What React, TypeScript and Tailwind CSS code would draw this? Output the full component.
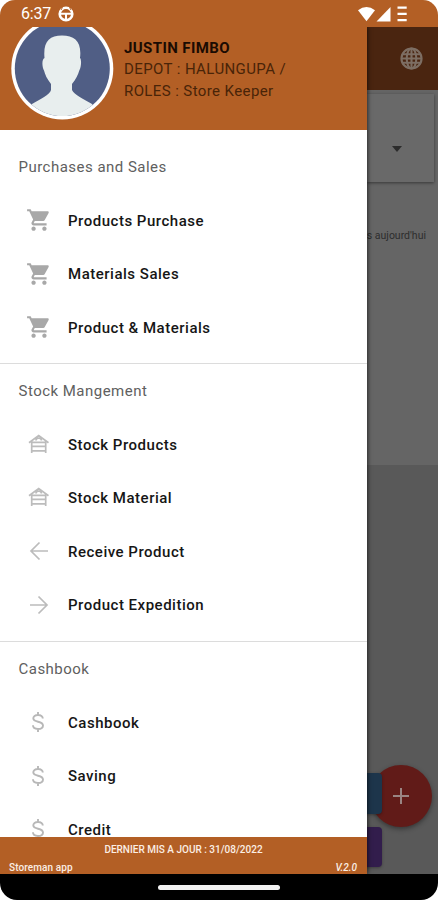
import type { ReactNode } from "react";

const CartIcon = () => (
  <svg viewBox="0 0 24 24" className="mb-[1px] ml-[25.5px] h-[26px] w-[26px] fill-[#a8a8a8]">
    <path d="M7 18c-1.1 0-1.990.9-1.990 2S5.900 22 7 22s2-.9 2-2-.9-2-2-2zM1 2v2h2l3.600 7.590-1.350 2.450c-.16.28-.25.61-.25.96 0 1.100.9 2 2 2h12v-2H7.420c-.14 0-.25-.11-.25-.25l.03-.12.9-1.630h7.450c.75 0 1.410-.41 1.750-1.030l3.580-6.490c.08-.14.12-.31.12-.48 0-.55-.45-1-1-1H5.210l-.94-2H1zm16 16c-1.100 0-1.990.9-1.990 2s.89 2 1.990 2 2-.9 2-2-.9-2-2-2z" />
  </svg>
);

const StoreIcon = () => (
  <svg viewBox="0 0 22 20" className="mb-[2px] ml-[28px] h-[20px] w-[22px] fill-none stroke-[#bcbcbc] stroke-[1.700]">
    <path d="M1 8.700 10.700 1.500 20.500 8.700M3.700 7v12M17.700 7v12M3.700 8.300h14M3.700 12.300h14M3.700 16.800h14M8 6.500a2.700 2.300 0 0 1 5.400 0" />
  </svg>
);

const LeftIcon = () => (
  <svg viewBox="0 0 20 20" className="mb-[1px] ml-[29px] h-5 w-5 fill-none stroke-[#bcbcbc] stroke-[1.700]">
    <path d="M19 10H2M10.500 1.500 2 10l8.500 8.500" />
  </svg>
);

const RightIcon = () => (
  <svg viewBox="0 0 20 20" className="mb-[1px] ml-[29px] h-5 w-5 fill-none stroke-[#bcbcbc] stroke-[1.700]">
    <path d="M1 10h17M9.500 1.500 18 10l-8.500 8.500" />
  </svg>
);

const DollarIcon = () => (
  <svg viewBox="0 0 12 20" className="mb-[1px] ml-[32px] h-5 w-3 fill-none stroke-[#b8b8b8] stroke-[1.900]">
    <path d="M6 0v3M6 17v3M10.800 6.500C10.800 4.300 9 3 6 3S1.300 4.300 1.300 6.300C1.300 11 11 8.500 11 13.500 11 15.700 9 17 6 17s-5-1.300-5-3.700" />
  </svg>
);

const Item = ({ icon, label }: { icon: ReactNode; label: string }) => (
  <li className="flex h-[53.5px] items-center">
    <span className="w-[68px] shrink-0">{icon}</span>
    <span className="pt-[0.5px] text-[15px] font-medium tracking-[0.51px] text-[#161616]">{label}</span>
  </li>
);

const Heading = ({ children }: { children: ReactNode }) => (
  <h2 className="flex h-[53.75px] items-center pl-[18.5px] text-[15px] tracking-[0.48px] text-[#606060]">{children}</h2>
);

const Divider = () => <hr className="mt-[9px] h-px border-0 bg-[#dcdcdc]" />;

const StatusBar = () => (
  <div className="flex h-[27px] shrink-0 items-center bg-[#b35f25] pl-[21px] text-white">
    <span className="w-[37px] pt-px text-[16px] leading-[26px] tracking-[-0.2px]">6:37</span>
    <svg viewBox="0 0 16 16" className="h-4 w-4">
      <circle cx="8" cy="8" r="6.300" className="fill-none stroke-white stroke-[2.600]" />
      <path d="M2 7.800h12M8 8v6" className="fill-none stroke-white stroke-[2]" />
      <path d="M4.500 1.300 3 4M11.500 1.300 13 4" className="stroke-[#b35f25] stroke-1" />
    </svg>
    <svg viewBox="0 0 51 18" className="ml-[283px] h-[18px] w-[51px] fill-white">
      <path d="M1 5.300Q9.500-1.500 18 5.300L9.500 16.200Z" />
      <path d="M19.500 16.500 33.500 2v14.500Z" />
      <path d="M40.500 1.500h9.200v2.300h-9.200zM40.500 7.800h9.200v2.200h-9.200zM40.500 14h9.200v2.300h-9.200z" />
    </svg>
  </div>
);

const Profile = () => (
  <header className="flex h-[103px] shrink-0 overflow-hidden bg-[#b35f25]">
    <svg viewBox="0 0 104 103" className="ml-[10px] h-[103px] w-[104px] shrink-0">
      <defs>
        <clipPath id="avatar">
          <circle cx="52.300" cy="41.500" r="47.500" />
        </clipPath>
      </defs>
      <circle cx="52.300" cy="41.500" r="51" fill="#fff" />
      <g clipPath="url(#avatar)">
        <path d="M0-10h104v103H0z" fill="#505e85" />
        <path
          d="M34.500 31C33 15 39 8.500 52 8.500S72 15 70 31c1.500 1 1.500 9-.7 12.500-1.300 4-3.300 9-7.300 13.500v6c2 5 12 9 20 14l10 16H12l10-16c8-5 18-9 19-14v-6c-4-5-6-9.500-7-13.500-2.200-4-2.200-11.500.5-12.500Z"
          fill="#e8eeee"
        />
      </g>
    </svg>
    <div className="ml-[10px] pt-[10.500px] text-[15px] leading-[21.500px] tracking-[0.4px] text-[#492408]">
      <div className="font-bold text-[#1a0b02]">JUSTIN FIMBO</div>
      <div>DEPOT : HALUNGUPA /</div>
      <div>ROLES : Store Keeper</div>
    </div>
  </header>
);

const Drawer = () => (
  <aside className="relative z-10 flex w-[367px] shrink-0 flex-col bg-white shadow-[1px_0_4px_rgba(0,0,0,0.6)]">
    <Profile />
    <nav className="min-h-0 flex-1 overflow-hidden pt-[10px]">
      <Heading>Purchases and Sales</Heading>
      <ul>
        <Item icon={<CartIcon />} label="Products Purchase" />
        <Item icon={<CartIcon />} label="Materials Sales" />
        <Item icon={<CartIcon />} label="Product &amp; Materials" />
      </ul>
      <Divider />
      <Heading>Stock Mangement</Heading>
      <ul>
        <Item icon={<StoreIcon />} label="Stock Products" />
        <Item icon={<StoreIcon />} label="Stock Material" />
        <Item icon={<LeftIcon />} label="Receive Product" />
        <Item icon={<RightIcon />} label="Product Expedition" />
      </ul>
      <Divider />
      <Heading>Cashbook</Heading>
      <ul>
        <Item icon={<DollarIcon />} label="Cashbook" />
        <Item icon={<DollarIcon />} label="Saving" />
        <Item icon={<DollarIcon />} label="Credit" />
      </ul>
    </nav>
    <footer className="h-[37px] shrink-0 bg-[#b35f25] text-[10px] font-medium text-[#fbeee4]">
      <div className="pt-[4px] text-center leading-[17px]">DERNIER MIS A JOUR : 31/08/2022</div>
      <div className="flex justify-between pr-[10px] pl-[9px] leading-[20px]">
        <span className="tracking-[0.1px]">Storeman app</span>
        <span className="italic">V.2.0</span>
      </div>
    </footer>
  </aside>
);

const Backdrop = () => (
  <main className="relative flex min-w-0 flex-1 flex-col overflow-hidden bg-[#595959]">
    <div className="flex h-[63px] shrink-0 items-center bg-[#4a2510] pl-[33px]">
      <svg viewBox="0 0 24 24" className="h-[23px] w-[23px] fill-none stroke-[#7d6e63] stroke-[2.200]">
        <circle cx="12" cy="12" r="10.500" />
        <ellipse cx="12" cy="12" rx="5" ry="10.500" />
        <path d="M12 1.500v21M1.500 12h21M3 7.500h18M3 16.500h18" />
      </svg>
    </div>
    <div className="h-[375px] shrink-0 bg-[#656565] pt-[4px]">
      <div className="mr-[4px] flex h-[88px] items-center bg-[#696969] pt-[21px] pl-[25px] shadow-[0_1px_3px_rgba(0,0,0,0.45)]">
        <svg viewBox="0 0 10 6" className="h-[6px] w-[10px] fill-[#2c2c2c]">
          <path d="M0 0h10L5 6Z" />
        </svg>
      </div>
      <div className="mt-[46px] flex justify-end pr-[12px] text-[10.500px] leading-[15px] whitespace-nowrap text-[#2d2d2d]">
        s aujourd'hui
      </div>
    </div>
    <button className="absolute top-[738px] left-[3px] flex h-[62px] w-[62px] items-center justify-center rounded-full bg-[#611b18] shadow-[0_2px_5px_rgba(0,0,0,0.4)]">
      <svg viewBox="0 0 16 16" className="h-4 w-4 stroke-[#9a8583] stroke-2">
        <path d="M8 0v16M0 8h16" />
      </svg>
    </button>
    <div className="absolute top-[746px] left-[-25px] h-[41px] w-[40px] rounded-[4px] bg-[#1d354b] shadow-[0_1px_3px_rgba(0,0,0,0.3)]" />
    <div className="absolute top-[800px] left-[-25px] h-[40px] w-[40px] rounded-[4px] bg-[#321d4c] shadow-[0_1px_3px_rgba(0,0,0,0.3)]" />
  </main>
);

export default function App() {
  return (
    <div className="h-[900px] w-[438px] bg-white font-[Roboto,sans-serif]">
      <div className="flex h-full flex-col overflow-hidden rounded-t-[15px] rounded-b-[17px]">
        <StatusBar />
        <div className="flex min-h-0 flex-1 overflow-hidden">
          <Drawer />
          <Backdrop />
        </div>
        <div className="flex h-[26px] shrink-0 justify-center bg-black pt-[11px]">
          <div className="h-[5px] w-[122px] rounded-full bg-[#f2f2f2]" />
        </div>
      </div>
    </div>
  );
}
